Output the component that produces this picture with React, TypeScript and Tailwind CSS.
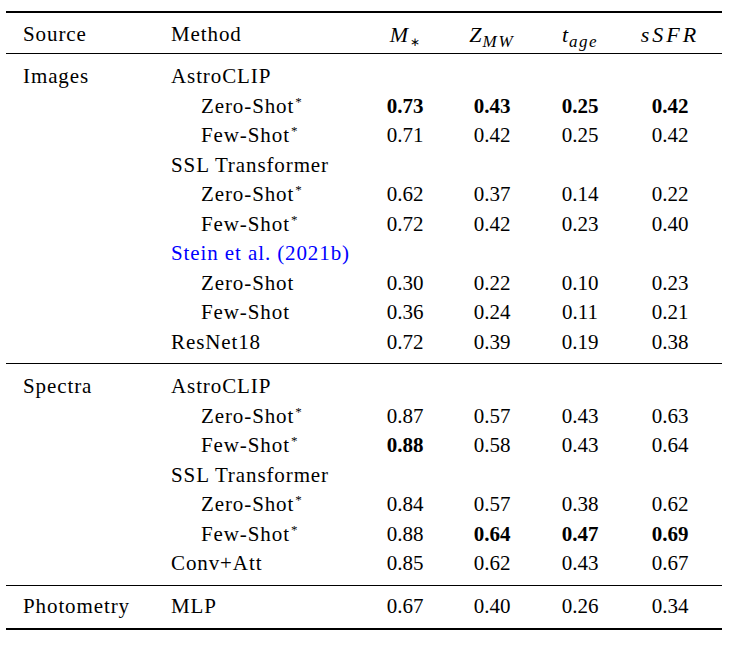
import React from "react";

type Row = {
  source?: string;
  method: React.ReactNode;
  indent?: boolean;
  vals?: string[];
  bold?: boolean[];
};

const Star = () => (
  <span className="relative -top-[7px] text-[13px] ml-[1px] tracking-normal">*</span>
);

const images: Row[] = [
  { source: "Images", method: "AstroCLIP" },
  { method: <>Zero-Shot<Star /></>, indent: true, vals: ["0.73", "0.43", "0.25", "0.42"], bold: [true, true, true, true] },
  { method: <>Few-Shot<Star /></>, indent: true, vals: ["0.71", "0.42", "0.25", "0.42"] },
  { method: "SSL Transformer" },
  { method: <>Zero-Shot<Star /></>, indent: true, vals: ["0.62", "0.37", "0.14", "0.22"] },
  { method: <>Few-Shot<Star /></>, indent: true, vals: ["0.72", "0.42", "0.23", "0.40"] },
  { method: <span className="text-[#0000ff]">Stein et al. (2021b)</span> },
  { method: "Zero-Shot", indent: true, vals: ["0.30", "0.22", "0.10", "0.23"] },
  { method: "Few-Shot", indent: true, vals: ["0.36", "0.24", "0.11", "0.21"] },
  { method: "ResNet18", vals: ["0.72", "0.39", "0.19", "0.38"] },
];

const spectra: Row[] = [
  { source: "Spectra", method: "AstroCLIP" },
  { method: <>Zero-Shot<Star /></>, indent: true, vals: ["0.87", "0.57", "0.43", "0.63"] },
  { method: <>Few-Shot<Star /></>, indent: true, vals: ["0.88", "0.58", "0.43", "0.64"], bold: [true, false, false, false] },
  { method: "SSL Transformer" },
  { method: <>Zero-Shot<Star /></>, indent: true, vals: ["0.84", "0.57", "0.38", "0.62"] },
  { method: <>Few-Shot<Star /></>, indent: true, vals: ["0.88", "0.64", "0.47", "0.69"], bold: [false, true, true, true] },
  { method: "Conv+Att", vals: ["0.85", "0.62", "0.43", "0.67"] },
];

const photo: Row[] = [
  { source: "Photometry", method: "MLP", vals: ["0.67", "0.40", "0.26", "0.34"] },
];

const numW = ["w-[86px]", "w-[88px]", "w-[88px]", "w-[92px]"];

function TRow({ r }: { r: Row }) {
  return (
    <div className="flex h-[29.5px] leading-[29.5px]">
      <div className="w-[165px] pl-[17px] tracking-[0.9px]">{r.source ?? ""}</div>
      <div className={`w-[191px] tracking-[0.9px] whitespace-nowrap ${r.indent ? "pl-[30px]" : ""}`}>
        {r.method}
      </div>
      {[0, 1, 2, 3].map((i) => (
        <div key={i} className={`${numW[i]} text-center ${r.bold?.[i] ? "font-bold" : ""}`}>
          {r.vals?.[i] ?? ""}
        </div>
      ))}
    </div>
  );
}

export default function App() {
  return (
    <div className="bg-white w-[731px] h-[648px] text-black text-[21px] font-['Liberation_Serif','Times_New_Roman',serif]">
      <div className="ml-[6px] w-[716px] pt-[11px]">
        <div className="h-[2px] bg-black" />
        {/* header */}
        <div className="pt-[6.7px] pb-[3.8px]">
          <div className="flex h-[29.5px] leading-[29.5px]">
            <div className="w-[165px] pl-[17px] tracking-[0.9px]">Source</div>
            <div className="w-[191px] tracking-[0.9px]">Method</div>
            <div className="w-[86px] text-center italic whitespace-nowrap">
              <span className="text-[22px]">M</span>
              <span className="relative top-[4px] text-[12px] not-italic ml-[2px]">∗</span>
            </div>
            <div className="w-[88px] text-center italic whitespace-nowrap">
              <span className="text-[22px] tracking-[1px]">Z</span>
              <span className="relative top-[5px] text-[17px] tracking-[2px]">MW</span>
            </div>
            <div className="w-[88px] text-center italic whitespace-nowrap">
              <span className="text-[22px] tracking-[1px]">t</span>
              <span className="relative top-[5px] text-[17px] tracking-[1.5px]">age</span>
            </div>
            <div className="w-[92px] text-center italic whitespace-nowrap text-[22px] tracking-[3px]">
              sSFR
            </div>
          </div>
        </div>
        <div className="h-[1px] bg-black" />
        <div className="pt-[8.2px] pb-[5.8px]">
          {images.map((r, i) => (
            <TRow key={i} r={r} />
          ))}
        </div>
        <div className="h-[1px] bg-black" />
        <div className="pt-[8.2px] pb-[6.3px]">
          {spectra.map((r, i) => (
            <TRow key={i} r={r} />
          ))}
        </div>
        <div className="h-[1px] bg-black" />
        <div className="pt-[5.7px] pb-[6.8px]">
          {photo.map((r, i) => (
            <TRow key={i} r={r} />
          ))}
        </div>
        <div className="h-[2px] bg-black" />
      </div>
    </div>
  );
}
